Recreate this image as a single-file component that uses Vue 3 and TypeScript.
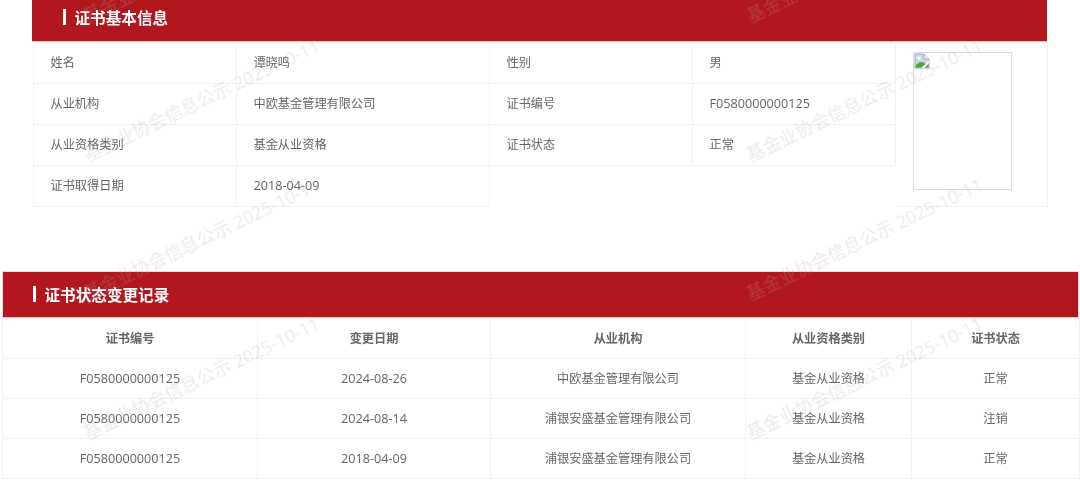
<script setup lang="ts">
interface ChangeRecord {
  no: string
  date: string
  org: string
  type: string
  status: string
}

const records: ChangeRecord[] = [
  { no: 'F0580000000125', date: '2024-08-26', org: '中欧基金管理有限公司', type: '基金从业资格', status: '正常' },
  { no: 'F0580000000125', date: '2024-08-14', org: '浦银安盛基金管理有限公司', type: '基金从业资格', status: '注销' },
  { no: 'F0580000000125', date: '2018-04-09', org: '浦银安盛基金管理有限公司', type: '基金从业资格', status: '正常' },
]

const headers: string[] = ['证书编号', '变更日期', '从业机构', '从业资格类别', '证书状态']

const marks: { x: number; y: number }[] = []
for (const y of [-40, 99, 238, 377]) {
  for (const x of [201, 864]) marks.push({ x, y })
}
</script>

<template>
  <div class="page">
    <div class="content">
      <section class="basic">
        <h2 class="bar"><i class="tick"></i>证书基本信息</h2>
        <table class="info">
          <colgroup>
            <col class="c1" /><col class="c2" /><col class="c3" /><col class="c4" /><col class="c5" />
          </colgroup>
          <tbody>
            <tr>
              <td>姓名</td>
              <td>谭晓鸣</td>
              <td>性别</td>
              <td>男</td>
              <td class="photo" rowspan="4">
                <div class="frame">
                  <svg class="broken" viewBox="0 0 16 16" width="16" height="16" aria-hidden="true">
                    <path d="M1 1h9l5 5v9H1z" fill="#c9d6ef" stroke="#a3aec2" stroke-width="1" />
                    <path d="M10 1v5h5" fill="#f2f5fb" stroke="#a3aec2" stroke-width="1" />
                    <circle cx="5" cy="5" r="1.8" fill="#ffffff" />
                    <path d="M1.5 14.5v-1.5c2.500-3.500 5.500-5 8-3.500l2 1.500-4 3.500z" fill="#4fa52f" />
                    <path d="M11 14.500l3.500-3.500v3.500z" fill="#4fa52f" />
                    <path d="M7.500 15l7.500-7.500v2.500l-5 5z" fill="#ffffff" />
                  </svg>
                </div>
              </td>
            </tr>
            <tr>
              <td>从业机构</td>
              <td>中欧基金管理有限公司</td>
              <td>证书编号</td>
              <td class="num">F0580000000125</td>
            </tr>
            <tr>
              <td>从业资格类别</td>
              <td>基金从业资格</td>
              <td>证书状态</td>
              <td>正常</td>
            </tr>
            <tr>
              <td>证书取得日期</td>
              <td class="num">2018-04-09</td>
              <td class="blank" colspan="2"></td>
            </tr>
          </tbody>
        </table>
      </section>

      <section class="history">
        <h2 class="bar outlined"><i class="tick"></i>证书状态变更记录</h2>
        <table class="log">
          <colgroup>
            <col class="l1" /><col class="l2" /><col class="l3" /><col class="l4" /><col class="l5" />
          </colgroup>
          <thead>
            <tr>
              <th v-for="h in headers" :key="h">{{ h }}</th>
            </tr>
          </thead>
          <tbody>
            <tr v-for="r in records" :key="r.date">
              <td class="num">{{ r.no }}</td>
              <td class="num">{{ r.date }}</td>
              <td>{{ r.org }}</td>
              <td>{{ r.type }}</td>
              <td>{{ r.status }}</td>
            </tr>
          </tbody>
        </table>
      </section>
    </div>

    <div class="marks" aria-hidden="true">
      <span
        v-for="m in marks"
        :key="`${m.x}-${m.y}`"
        class="mark"
        :style="{ left: m.x + 'px', top: m.y + 'px' }"
      >基金业协会信息公示 2025-10-11</span>
    </div>
  </div>
</template>

<style>
html,
body {
  margin: 0;
  background: #fff;
}
</style>

<style scoped>
.page {
  position: relative;
  width: 1080px;
  height: 486px;
  overflow: hidden;
  background: #fff;
  font-family: "Open Sans", "Noto Sans CJK SC", sans-serif;
  color: #666;
  font-size: 12.2px;
}

.content {
  filter: blur(0.45px);
}

.basic {
  width: 1015px;
  margin: -6px 0 0 32px;
}

.history {
  width: 1077px;
  margin: 64px 0 0 2px;
}

.bar {
  display: flex;
  align-items: center;
  box-sizing: border-box;
  height: 48px;
  margin: 0;
  padding: 0 0 2px 31px;
  background: #b2161f;
  border-bottom: 1px solid #e8c2c5;
  color: #fff;
  font-size: 15.6px;
  font-weight: 700;
  font-family: "Noto Sans CJK SC", sans-serif;
}

.outlined {
  height: 47px;
  border: 1px solid #e9dcdd;
  border-bottom-color: #e8c2c5;
  padding: 0 0 2px 30px;
}

.tick {
  display: block;
  width: 3px;
  height: 16px;
  margin-right: 8.5px;
  background: #fff;
}

table {
  border-collapse: collapse;
  table-layout: fixed;
}

td,
th {
  box-sizing: border-box;
  padding: 0 0 2px;
  border: 1px solid #f2f2f2;
}

.num {
  font-size: 12.65px;
}

.info {
  width: 1014px;
  margin: 0 0 0 1px;
}

.info td {
  height: 41px;
  padding-left: 16.5px;
}

.c1 { width: 203px; }
.c2 { width: 253px; }
.c3 { width: 203px; }
.c4 { width: 203px; }
.c5 { width: 152px; }

.info td.blank {
  border: none;
}

.info td.photo {
  padding: 9px 0 0 17px;
  vertical-align: top;
  border-left: none;
}

.frame {
  box-sizing: border-box;
  width: 99px;
  height: 138px;
  border: 1px solid #dcdcdc;
}

.broken {
  display: block;
}

.log {
  width: 1077px;
}

.log th,
.log td {
  height: 40px;
  text-align: center;
}

.log th {
  font-weight: 700;
  font-family: "Noto Sans CJK SC", sans-serif;
}

.l1 { width: 255px; }
.l2 { width: 233px; }
.l3 { width: 255px; }
.l4 { width: 166px; }
.l5 { width: 168px; }

.marks {
  position: absolute;
  inset: 0;
  pointer-events: none;
}

.mark {
  position: absolute;
  transform: translate(-50%, -50%) rotate(-25.5deg);
  white-space: nowrap;
  font-size: 17.9px;
  color: rgba(170, 170, 170, 0.24);
  filter: blur(0.4px);
}
</style>
